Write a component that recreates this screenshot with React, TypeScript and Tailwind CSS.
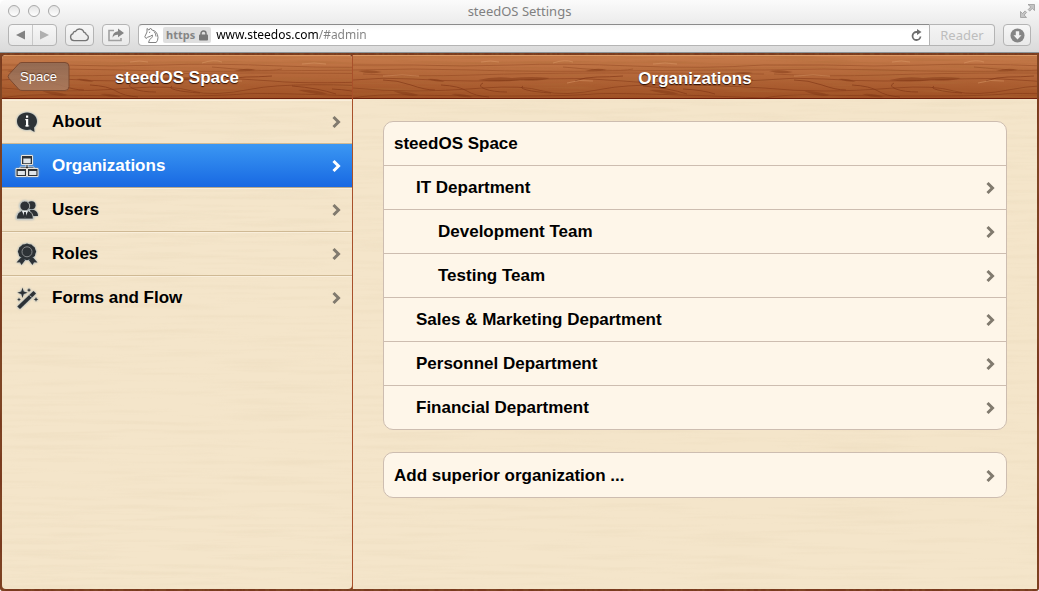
import type { ReactNode } from "react";

function DarkWood({ id, freq, seed }: { id: string; freq: string; seed: number }) {
  return (
    <svg className="pointer-events-none absolute inset-0 h-full w-full" aria-hidden="true">
      <filter id={id} x="0" y="0" width="100%" height="100%">
        <feTurbulence type="fractalNoise" baseFrequency={freq} numOctaves={3} seed={seed} />
        <feColorMatrix values="0 0 0 0 0.22  0 0 0 0 0.07  0 0 0 0 0.02  3.6 0 0 0 -1.4" />
      </filter>
      <rect width="100%" height="100%" filter={`url(#${id})`} opacity="0.7" />
    </svg>
  );
}

function HeaderWood({ id }: { id: string }) {
  return (
    <svg className="pointer-events-none absolute inset-0 h-full w-full" aria-hidden="true">
      <defs>
        <filter id={`${id}-grain`} x="0" y="0" width="100%" height="100%">
          <feTurbulence type="fractalNoise" baseFrequency="0.012 0.35" numOctaves={3} seed={5} />
          <feColorMatrix values="0 0 0 0 0.42  0 0 0 0 0.15  0 0 0 0 0.04  3 0 0 0 -1.4" />
        </filter>
        <pattern id={id} width="411" height="43" patternUnits="userSpaceOnUse">
          <g fill="none" stroke="#7d3212">
            <path
              d="M0 9h60q50 2 100 0t120 1 131-1M0 14q60-2 120 0t140 1 151-1M10 18q50 3 110 1t130-2 161 1M210 11q20 2 40 3t30-1"
              opacity=".35"
            />
            <path
              d="M0 24q30-3 60-1t60 2 70-2 80 2 141-1M0 32q30 3 60 3t70-3 60 3 60-2 161-1M0 42q20-4 60-3t100 1 80-2 171 4"
              opacity=".5"
            />
            <path d="M30 24q14 0 28 5t24 5M88 29q18 1 26 6t22 6M130 27q-6 3 2 6t22 3M170 30q-4 2 4 4t24 3M222 25q10-4 22-4t26-1M290 30q26 2 44 8M330 33q20 1 32 5M360 26q20-3 40-2" opacity=".6" />
          </g>
          <g fill="#7d3212" opacity=".45">
            <path d="M5 15q12-2 24 1-12 3-24-1zM74 23q10-1 18 3-10 0-18-3zM125 24q16-4 34-2 20-2 38 0-10 4-30 2-20 3-42 0zM40 35q14 0 26 4-10 3-26-4zM98 38q12-1 22 3-12 1-22-3zM232 15q12-4 22-1-10 2-22 1zM296 34q16-1 30 4-16 1-30-4zM380 17q12-2 20 0-8 2-20 0z" />
          </g>
          <path d="M200 7q12-4 20-1M128 6q10-2 18 0M300 8q12-2 24 0M30 20q20-2 36 0M214 27q12-4 26-2" fill="none" stroke="#dc9a68" opacity=".5" />
        </pattern>
      </defs>
      <rect width="100%" height="100%" filter={`url(#${id}-grain)`} opacity=".4" />
      <rect width="100%" height="100%" fill={`url(#${id})`} />
    </svg>
  );
}

function PaleWood({ id }: { id: string }) {
  return (
    <svg className="pointer-events-none absolute inset-0 h-full w-full" aria-hidden="true">
      <filter id={id} x="0" y="0" width="100%" height="100%">
        <feTurbulence type="fractalNoise" baseFrequency="0.009 0.2" numOctaves={3} seed={8} />
        <feColorMatrix values="0 0 0 0 0.75  0 0 0 0 0.62  0 0 0 0 0.42  2.4 0 0 0 -1.1" />
      </filter>
      <rect width="100%" height="100%" filter={`url(#${id})`} opacity="0.2" />
    </svg>
  );
}

function Chevron({ light }: { light?: boolean }) {
  return (
    <svg width="10" height="14" viewBox="0 0 10 14" fill="none" className={light ? "text-white" : "text-[#817a6e]"} aria-hidden="true">
      <path d="M1.500 2l5 5-5 5" stroke="currentColor" strokeWidth="3" />
    </svg>
  );
}

function Glyph({ children }: { children: ReactNode }) {
  return (
    <svg width="24" height="24" viewBox="0 0 24 24" className="shrink-0 text-[#2d3236] drop-shadow-[0_0_1px_#7f9cb4]" fill="currentColor" aria-hidden="true">
      {children}
    </svg>
  );
}

const aboutIcon = (
  <Glyph>
    <path d="M12 2.500c5.600 0 10 3.800 10 8.700 0 2.600-1.200 4.800-3 6.400l.5 4.400-4.200-2.500c-1 .3-2.100.4-3.300.4-5.600 0-10-3.800-10-8.700s4.400-8.700 10-8.700z" />
    <path d="M11 5.500h2.200v2.200H11zM11 9h2.200v7.500H11z" fill="#fff" />
    <path d="M10 9h1.200v1.200H10zM10 15.300h4.200v1.200H10z" fill="#fff" opacity=".7" />
  </Glyph>
);
const orgIcon = (
  <Glyph>
    <path d="M11 10h2v3h6v3h-2v-1H7v1H5v-3h6z" stroke="#dfe5ea" strokeWidth=".8" />
    <g stroke="#e9e5dc" strokeWidth="1">
      <path d="M6.500 1.500h11v9h-11zM1 14.500h10.500v8H1zM12.500 14.500H23v8H12.500z" />
    </g>
    <path d="M8.300 4.500h7.400v4.700H8.300zM2.700 17h7.200v4H2.700zM14.200 17h7.200v4h-7.200z" fill="#dfe5e8" />
  </Glyph>
);
const usersIcon = (
  <Glyph>
    <circle cx="16.500" cy="7.200" r="4" />
    <path d="M15 12h4q4 1.500 4 6h-7z" />
    <circle cx="9.800" cy="8" r="4.900" stroke="#dfe2dc" strokeWidth=".7" />
    <path d="M1.500 21q0-6.500 5-8.200h6.800q5 1.700 5 8.200z" stroke="#dfe2dc" strokeWidth=".7" />
    <path d="M7 13l3 7.500L13 13z" fill="#e9eef0" />
    <path d="M9.200 14h1.600l.8 4.500-1.600 2-1.600-2z" />
  </Glyph>
);
const rolesIcon = (
  <Glyph>
    <path d="M6 15.500L1.500 20.500l3.500-.2 1.500 2.700 3.700-5zM18 15.500l4.500 5-3.500-.2-1.500 2.700-3.700-5z" />
    <path d="M12 1.500l2.100.7 2.300.2 1.500 1.700 1.900 1.300.5 2.200.9 2-.9 2.100-.4 2.300-1.900 1.300-1.400 1.800-2.300.3-2.300.8-2.300-.8-2.300-.3L6 15.300 4.100 14l-.4-2.300-.9-2.100.9-2 .5-2.200 1.900-1.300 1.500-1.700 2.300-.2z" />
    <circle cx="12" cy="9.800" r="5" fill="none" stroke="#85888a" strokeWidth="1" />
  </Glyph>
);
const wandIcon = (
  <Glyph>
    <path d="M18.500 5l2.500 2.500L5 23l-2.700-2.500z" />
    <path d="M14.800 9.500l2 2" stroke="#c6cdd0" />
    <path d="M7.500 1.500l1.200 4 4 1.200-4 1.200-1.200 4-1.200-4-4-1.200 4-1.200zM14 2l.6 1.500 1.500.6-1.500.6L14 6.200l-.6-1.500-1.500-.6 1.500-.6zM21 11l.7 1.700 1.700.7-1.700.7L21 15.800l-.7-1.700-1.700-.7 1.700-.7zM4 11.500l.6 1.400 1.400.6-1.400.6L4 15.500l-.6-1.400-1.400-.6 1.400-.6z" />
  </Glyph>
);

const menu = [
  { label: "About", icon: aboutIcon },
  { label: "Organizations", icon: orgIcon, active: true },
  { label: "Users", icon: usersIcon },
  { label: "Roles", icon: rolesIcon },
  { label: "Forms and Flow", icon: wandIcon },
];

const units = [
  { label: "IT Department", indent: "pl-8" },
  { label: "Development Team", indent: "pl-[54px]" },
  { label: "Testing Team", indent: "pl-[54px]" },
  { label: "Sales & Marketing Department", indent: "pl-8" },
  { label: "Personnel Department", indent: "pl-8" },
  { label: "Financial Department", indent: "pl-8" },
];

const toolButton =
  "flex h-[22px] items-center justify-center rounded-[4px] border border-[#b4b4b4] bg-linear-to-b from-[#f7f7f7] to-[#e9e9e9]";

function BrowserBar() {
  return (
    <div className="rounded-t-[5px] border-b border-[#8b9499] bg-linear-to-b from-[#fbfbfb] to-[#dadada] font-['Noto_Sans',sans-serif]">
      <div className="relative flex h-6 items-center justify-center">
        <div className="absolute left-2 top-[5px] flex gap-2">
          {["Close", "Minimize", "Zoom"].map((name) => (
            <button key={name} aria-label={name} className="h-3 w-3 rounded-full border border-[#a9a9a9] bg-linear-to-b from-[#e4e4e4] to-white" />
          ))}
        </div>
        <span className="text-[13px] text-[#808080]">steedOS Settings</span>
        <button aria-label="Full screen" className="absolute right-1 top-1">
          <svg width="15" height="14" viewBox="0 0 15 14" fill="#c4c4c4" stroke="#929292" strokeWidth=".7">
            <path d="M8 .500h6.500v6l-2.200-2-2.600 2.600-1.500-1.500 2.600-2.700zM.5 7.500l2 2 2.600-2.600 1.500 1.500L4.200 11l2.300 2.500h-6z" />
          </svg>
        </button>
      </div>
      <div className="flex px-2 pb-1.5">
        <div className={`${toolButton} w-[49px] shrink-0`}>
          <button aria-label="Back" className="flex flex-1 justify-center">
            <svg width="9" height="10" viewBox="0 0 9 10"><path d="M9 .500v9L0 5z" fill="#828282" /></svg>
          </button>
          <span className="h-5 w-px bg-[#c8c8c8]" />
          <button aria-label="Forward" className="flex flex-1 justify-center">
            <svg width="9" height="10" viewBox="0 0 9 10"><path d="M0 .500v9L9 5z" fill="#b0b0b0" /></svg>
          </button>
        </div>
        <button aria-label="Cloud tabs" className={`${toolButton} ml-2 w-[29px] shrink-0`}>
          <svg width="21" height="14" viewBox="0 0 21 14" fill="none" stroke="#747474" strokeWidth="1.300">
            <path d="M5 12.700a3.600 3.600 0 0 1-1-7Q4.200 3.200 6.500 3.500A4.600 4.600 0 0 1 15 4.300q2 .2 2.200 2.200a3.200 3.200 0 0 1-.7 6.200z" />
          </svg>
        </button>
        <button aria-label="Share" className={`${toolButton} ml-2 w-7 shrink-0`}>
          <svg width="18" height="14" viewBox="0 0 18 14" fill="none">
            <path d="M7 2.500H2v10h12V10" stroke="#a0a0a0" strokeWidth="1.600" />
            <path d="M11 .500l6 4.500-6 4.300V6.700Q7 6.500 5.500 9.800 5.500 3.800 11 3.200z" fill="#858585" />
          </svg>
        </button>
        <div className="ml-2 flex h-[22px] min-w-0 flex-1 items-center rounded-l-[4px] border border-t-[#8b8b8b] border-[#b4b4b4] bg-linear-to-b from-[#f6f6f6] to-white to-30% pl-[5px]">
          <svg width="15" height="17" viewBox="0 0 15 17" fill="none" stroke="#828282" strokeWidth="1" className="shrink-0" aria-hidden="true">
            <path d="M3 1.500l2 1.600L6.500 1l1.200 1.900q5.800 1 6.300 7.600 0 3-1.800 5H4.500q.3-2.700 3.500-5.200.8-1.200.3-2.300-2 1.700-4.600 2.200L2 11.500.8 9.800 3 5z" />
            <path d="M5 5.500l1.200-.4M10 4.500q2 2 2 5" />
          </svg>
          <span className="ml-1 flex h-4 shrink-0 items-center gap-1 rounded-[2px] bg-[#dfdfdf] px-[3px] text-[11px] font-bold text-[#858585]">
            https
            <svg width="9" height="11" viewBox="0 0 9 11" aria-hidden="true">
              <path d="M2 5V3.500a2.500 2.500 0 0 1 5 0V5" fill="none" stroke="#777" strokeWidth="1.500" />
              <rect y="4.500" width="9" height="6" rx=".8" fill="#777" />
            </svg>
          </span>
          <input
            aria-label="Address"
            defaultValue="www.steedos.com/#admin"
            className="ml-[5px] h-[18px] min-w-0 flex-1 bg-linear-to-r from-black from-[103px] to-[#808080] to-[103px] bg-clip-text text-[12px] text-transparent outline-none"
          />
          <button aria-label="Reload" className="mr-1.5 shrink-0">
            <svg width="13" height="13" viewBox="0 0 13 13" fill="none">
              <path d="M8 3H6.500a4 4 0 1 0 4 4.500" stroke="#6d6d6d" strokeWidth="1.800" />
              <path d="M7 0l4.500 3L7 6z" fill="#6d6d6d" />
            </svg>
          </button>
        </div>
        <button className="h-[22px] w-[65px] shrink-0 rounded-r-[4px] border border-l-0 border-[#b4b4b4] bg-linear-to-b from-[#f4f4f4] to-[#ebebeb] text-[13px] leading-5 text-[#bdbdbd]">
          Reader
        </button>
        <button aria-label="Downloads" className={`${toolButton} ml-2 w-7 shrink-0`}>
          <svg width="15" height="15" viewBox="0 0 15 15">
            <circle cx="7.500" cy="7.500" r="7" fill="#858585" />
            <path d="M5.800 3.300h3.400v4h2.300l-4 4.200-4-4.200h2.300z" fill="#f2f2f2" />
          </svg>
        </button>
      </div>
    </div>
  );
}

const headerBar =
  "relative flex h-11 items-center justify-center border-b border-[#6d1f0c] border-t border-t-[#dd9a66] bg-linear-to-b from-[#c67b4b] to-[#9f5024]";
const headerTitle = "relative text-[17px] leading-5 font-bold text-white [text-shadow:0_1px_1px_#2b0d00]";

export default function App() {
  return (
    <div className="flex min-h-screen flex-col bg-white font-['Liberation_Sans',sans-serif] text-black">
      <BrowserBar />
      <div className="relative flex flex-1 overflow-hidden rounded-b-[3px] bg-[#7a3a1e] p-0.5">
        <DarkWood id="frame-grain" freq="0.2 0.02" seed={3} />
        <aside className="relative flex w-[350px] shrink-0 flex-col overflow-hidden rounded-[4px] bg-[#f4e5ca]">
          <PaleWood id="side-grain" />
          <header className={headerBar}>
            <HeaderWood id="side-header" />
            <button className="absolute left-[5px] top-[6px] flex h-[30px] w-[63px] items-center justify-center text-[13px] text-white [text-shadow:0_-1px_1px_#5a3a28]">
              <svg className="absolute inset-0" width="63" height="30" viewBox="0 0 63 30" aria-hidden="true">
                <defs>
                  <linearGradient id="back-fill" x1="0" y1="0" x2="0" y2="1">
                    <stop offset="0" stopColor="#8d6a56" />
                    <stop offset="1" stopColor="#ab7d61" />
                  </linearGradient>
                </defs>
                <path d="M12 1.500Q13 .500 15 .500h43q4 0 4 4v20q0 4-4 4H15q-2 0-3-1L2 16.500q-1.800-2 0-4z" fill="url(#back-fill)" fillOpacity=".85" stroke="#7d4a30" />
              </svg>
              <span className="relative">Space</span>
            </button>
            <h1 className={`${headerTitle} pt-0.5`}>steedOS Space</h1>
          </header>
          <nav className="relative pt-px">
            {menu.map((m) => (
              <a
                key={m.label}
                href="#admin"
                aria-current={m.active ? "page" : undefined}
                className={
                  m.active
                    ? "flex h-11 items-center border-b border-[#b9a98c] bg-linear-to-b from-[#3b97f3] to-[#1968e2] pl-[13px] pr-2.5 pt-px text-[17px] font-bold text-white"
                    : "flex h-11 items-center border-b border-[#cfb994] pl-[13px] pr-2.5 pt-px text-[17px] font-bold shadow-[inset_0_1px_0_#f9eedb] last:border-transparent"
                }
              >
                {m.icon}
                <span className="ml-[13px] flex-1">{m.label}</span>
                <Chevron light={m.active} />
              </a>
            ))}
          </nav>
        </aside>
        <main className="relative flex min-w-0 flex-1 flex-col overflow-hidden border-l border-[#a8502a] bg-[#f4e5ca]">
          <PaleWood id="main-grain" />
          <header className={headerBar}>
            <HeaderWood id="main-header" />
            <h2 className={`${headerTitle} pt-1`}>Organizations</h2>
          </header>
          <div className="relative flex flex-col gap-[21px] px-[30px] py-[22px] text-[17px] font-bold">
            <ul className="divide-y divide-[#cdbdb0] rounded-[10px] border border-[#cdbdb0] bg-[#fef6e9]">
              <li className="flex h-11 items-center px-2.5 pt-px">steedOS Space</li>
              {units.map((u) => (
                <li key={u.label}>
                  <a href="#admin" className={`flex h-[43px] items-center pr-2.5 pt-px last:pb-0 ${u.indent}`}>
                    <span className="flex-1">{u.label}</span>
                    <Chevron />
                  </a>
                </li>
              ))}
            </ul>
            <a href="#admin" className="mt-px flex h-[46px] items-center rounded-[10px] border border-[#cdbdb0] bg-[#fef6e9] px-2.5 pt-px">
              <span className="flex-1">Add superior organization ...</span>
              <Chevron />
            </a>
          </div>
        </main>
      </div>
    </div>
  );
}
